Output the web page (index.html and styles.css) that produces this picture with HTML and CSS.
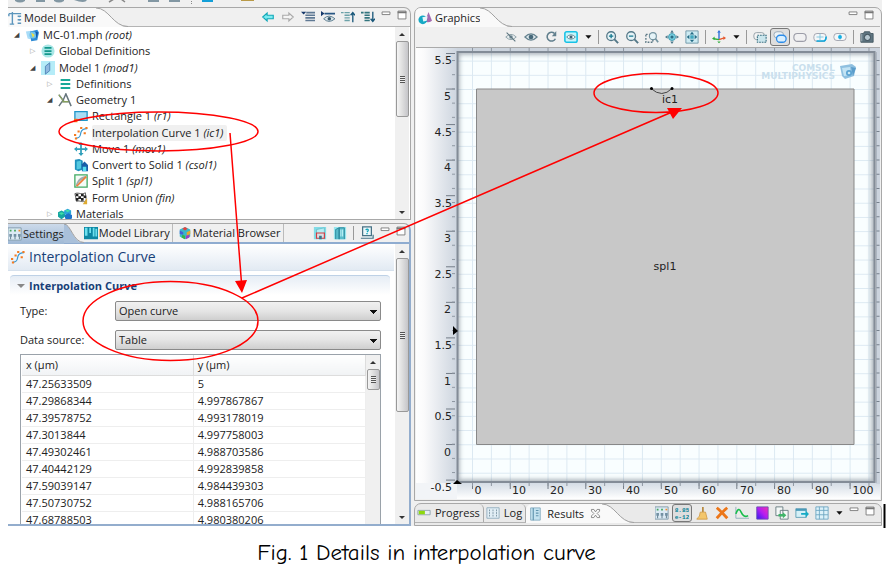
FILE: index.html
```html
<!DOCTYPE html>
<html lang="en">
<head>
<meta charset="utf-8">
<title>Details in interpolation curve</title>
<link rel="stylesheet" href="styles.css">
</head>
<body>
<svg class="defs" aria-hidden="true">
  <defs>
    <symbol id="i-builder" viewBox="0 0 16 16"><path d="M1 3h14M5 1v14M1 3v3M2 15h5M13 5v2M13 9v2M13 13v1M11 6h4M11 10h4M11 14h4" fill="none" stroke="#5c96bd" stroke-width="1.6"/></symbol>
    <symbol id="i-root" viewBox="0 0 16 16"><path d="M1 4l6-1v10l-4-1z" fill="#a9dcf7"/><path d="M6 4l8-2 2 3-2 9-7 1z" fill="#2d8ad4"/><circle cx="9" cy="8" r="4" fill="#6fc3ee"/><path d="M7 5l4 3-2 3" fill="#f3e13f"/><path d="M12 4l3 1-2 7" fill="#1358a8"/></symbol>
    <symbol id="i-globe" viewBox="0 0 16 16"><circle cx="8" cy="8" r="7.5" fill="#a8e6e6"/><path d="M4 4.500h8M4 8h8M4 11.500h8" stroke="#12978b" stroke-width="2"/></symbol>
    <symbol id="i-model" viewBox="0 0 16 16"><path d="M0 0h16v16H0z" fill="#b5ecf8"/><path d="M5 6l5-4v9l-5 4z" fill="#8fb9e0" stroke="#4d81b5"/></symbol>
    <symbol id="i-defs" viewBox="0 0 16 16"><path d="M3 3.500h11M3 8h11M3 12.500h11" stroke="#19a999" stroke-width="2.400"/></symbol>
    <symbol id="i-geom" viewBox="0 0 16 16"><path d="M1 15l5-7 3-7 6 14M1 2l6 8M5 10h8" fill="none" stroke="#67767d" stroke-width="1.700"/><path d="M1 2l5 7M5 10h7" stroke="#9ab94a" fill="none"/></symbol>
    <symbol id="i-rect" viewBox="0 0 16 16"><path d="M1 3h14v10H1z" fill="#a9def5" stroke="#2196c8" stroke-width="1.500"/><path d="M0 11h4v4H0z" fill="#f58220"/></symbol>
    <symbol id="i-curve" viewBox="0 0 16 16"><path d="M2 14c6 0 5-4 6-7s3-4 7-4" fill="none" stroke="#3a99d0" stroke-width="1.400"/><path d="M0 9h2.500v2.500H0zM4 5h2.500v2.500H4zM7 1h2.500v2.500H7zM13 1h2.500v2.500H13zM11 7h2.500v2.500H11zM1 13h2.500v2.500H1z" fill="#f47b20"/></symbol>
    <symbol id="i-move" viewBox="0 0 16 16"><path d="M8 0l3 3.500H9V7h3.500V5L16 8l-3.500 3V9H9v3.500h2L8 16l-3-3.500h2V9H3.500v2L0 8l3.500-3v2H7V3.500H5z" fill="#2f9fba"/></symbol>
    <symbol id="i-convert" viewBox="0 0 16 16"><path d="M1 2l5-1 4 2v10l-5 2-4-2z" fill="#1e91bd"/><path d="M3 4l5-1v9l-5 1z" fill="#54c8e0"/><path d="M9 7l3-3 4 4v7H9z" fill="#1a5ea8"/><path d="M10 10h4v5h-4z" fill="#57dff0"/></symbol>
    <symbol id="i-split" viewBox="0 0 16 16"><path d="M1 1h14v14H1z" fill="#f4fbf6" stroke="#41aa63" stroke-width="1.500"/><path d="M2 13c2-7 6-10 12-11l-3 4c-4 1-6 4-8 8z" fill="#a2a9ae"/><path d="M3 14l11-11" stroke="#ef7d35" stroke-width="2"/></symbol>
    <symbol id="i-union" viewBox="0 0 16 16"><path d="M1 3c5-2 7 2 12-1l1 9c-5 3-7-1-11 1z" fill="#fff" stroke="#555"/><path d="M2 3h3v3H2zM8 3h3v3H8zM5 6h3v3H5zM11 5h3v3h-3zM2 8h3v3H2zM8 8h3v3H8z" fill="#222"/><path d="M10 15l5-7v7z" fill="#dfab31"/></symbol>
    <symbol id="i-mat" viewBox="0 0 16 16"><path d="M0 6l4-2 4 2v5l-4 3-4-3z" fill="#16a6a1"/><path d="M7 4l4-2 4 2v4l-4 2-4-2z" fill="#2aa6d8"/><path d="M8 9l4-2 4 2v4l-4 2-4-2z" fill="#1d73c9"/><path d="M1 7l3-1 3 1-3 2zM8 4l3-1 3 1-3 2z" fill="#3de0a4"/></symbol>
    <symbol id="i-browser" viewBox="0 0 16 16"><path d="M8 1l6 3v8l-6 3-6-3V4z" fill="#3bb7c9"/><path d="M8 1l3 2-3 2-3-2z" fill="#e6413a"/><path d="M2 5l4 2v3L2 9z" fill="#4561d6"/><path d="M10 7l4-2v4l-4 2z" fill="#e9a52e"/><path d="M5 10l3 1v4l-4-2z" fill="#35b34a"/><path d="M9 11l4-1v3l-4 2z" fill="#a03ec0"/></symbol>
    <symbol id="i-settings" viewBox="0 0 16 16"><path d="M0 1h15v14H0z" fill="#dceaf4" stroke="#7d97a8"/><path d="M3 8v6M8 8v6M13 8v6" stroke="#54707f"/><path d="M2 4h2M7 4h2" stroke="#43a55a" stroke-width="2"/><path d="M12 4h2" stroke="#f08a2c" stroke-width="2"/><path d="M1.500 8h3v3h-3zM6.500 8h3v3h-3zM11.500 8h3v3h-3z" fill="#7390a2"/></symbol>
    <symbol id="i-lib" viewBox="0 0 16 16"><path d="M0 1h16v14H0z" fill="#0d87a3"/><path d="M1 2h3v9H1zM6 2h2v6H6zM10 2h2v10h-2zM13 3h2v9h-2z" fill="#6ce0ee"/></symbol>
    <symbol id="i-back" viewBox="0 0 16 16"><path d="M2 8l5-4.500V6h7v4H7v2.500z" fill="#7cecf2" stroke="#13a8b8" stroke-width="1.300"/></symbol>
    <symbol id="i-fwd" viewBox="0 0 16 16"><path d="M14 8L9 3.500V6H2v4h7v2.500z" fill="#f5f5f5" stroke="#aaa" stroke-width="1.300"/></symbol>
    <symbol id="i-list" viewBox="0 0 16 16"><path d="M0 2h6L3 5z" fill="#16386b"/><path d="M6 3h10M5 6h11M5 9h11M5 12h11" stroke="#5f7994" stroke-width="1.800"/></symbol>
    <symbol id="i-listeye" viewBox="0 0 16 16"><path d="M0 1v6l4-3z" fill="#16386b"/><path d="M4 4h12" stroke="#285784" stroke-width="2"/><path d="M3 10q6-6 13 0-7 6-13 0z" fill="#dbe6ec" stroke="#4f7286"/><circle cx="9.500" cy="10" r="2" fill="#35566b"/></symbol>
    <symbol id="i-up" viewBox="0 0 16 16"><path d="M0 3h3M4 3h6M4 6h6M4 9h6M4 12h6" stroke="#6ca2a9" stroke-width="1.600"/><path d="M13.500 14V3M11 6l2.500-3L16 6" fill="none" stroke="#175679" stroke-width="1.500"/></symbol>
    <symbol id="i-down" viewBox="0 0 16 16"><path d="M0 3h3M4 3h6M4 6h6M4 9h6M4 12h6" stroke="#33757e" stroke-width="1.800"/><path d="M13.500 2v11M11 10l2.500 3 2.500-3" fill="none" stroke="#175679" stroke-width="1.500"/></symbol>
    <symbol id="i-min" viewBox="0 0 16 16"><path d="M3.500 4.500h9v3h-9z" fill="#fff" stroke="#777"/></symbol>
    <symbol id="i-max" viewBox="0 0 16 16"><path d="M3.500 3.500h9v9h-9z" fill="#fff" stroke="#777"/><path d="M3 5h10" stroke="#777" stroke-width="2"/></symbol>
    <symbol id="i-build" viewBox="0 0 16 16"><path d="M1 1h14v14H1z" fill="#83dce6"/><path d="M4 15V4l9-2v13" fill="#b6eef3" stroke="#6cc0cd"/><path d="M4 8h9v6H4z" fill="#d9dfe4" stroke="#d2393f" stroke-width="1.300"/><path d="M7 11h3v4H7z" fill="#35798b"/></symbol>
    <symbol id="i-buildall" viewBox="0 0 16 16"><path d="M1 1h14v14H1z" fill="#96e6ee"/><path d="M3 15V4l4-2v13M7 15V2h6v13" fill="#59bccb" stroke="#2a8699"/><path d="M9 4v8M11 4v8" stroke="#d4fbff"/></symbol>
    <symbol id="i-help" viewBox="0 0 16 16"><path d="M3 1h10v10H3zM1 14h14v-4" fill="#eaf7fa" stroke="#477285" stroke-width="1.400"/><path d="M6.500 4.500q2-2 3 0 0 1-1.500 2.500M8 8v1.500" fill="none" stroke="#0ba2b7" stroke-width="1.500"/></symbol>
    <symbol id="i-graph" viewBox="0 0 16 16"><path d="M8 12L12 1l4 10q-4 3-8 1z" fill="#a46bb0"/><circle cx="5.500" cy="10" r="5" fill="#16a9c5"/><path d="M5 7l6-1-1 5-4 1z" fill="#e6f7fb"/></symbol>
    <symbol id="i-eye" viewBox="0 0 16 16"><path d="M1 8q7-7 14 0-7 7-14 0z" fill="#dce6eb" stroke="#64828f" stroke-width="1.300"/><circle cx="8" cy="8" r="2.700" fill="#466879"/></symbol>
    <symbol id="i-eyeoff" viewBox="0 0 16 16"><path d="M2 8q6-6 12 0-6 6-12 0z" fill="#e8edef" stroke="#879ba4"/><circle cx="8" cy="8" r="2" fill="#6f8893"/><path d="M3 3l10 10" stroke="#5c747f" stroke-width="1.300"/></symbol>
    <symbol id="i-reset" viewBox="0 0 16 16"><path d="M13 10a5 5 0 1 1-1-6" fill="none" stroke="#617f8d" stroke-width="1.800"/><path d="M14 1v6H9z" fill="#617f8d"/></symbol>
    <symbol id="i-eyebox" viewBox="0 0 16 16"><rect x="1" y="2" width="14" height="12" rx="2" fill="#c5f5fb" stroke="#18c2e6" stroke-width="1.800"/><path d="M3 8q5-5 10 0-5 5-10 0z" fill="#fff" stroke="#557b8a"/><circle cx="8" cy="8" r="1.800" fill="#3d6374"/></symbol>
    <symbol id="i-caret" viewBox="0 0 16 16"><path d="M5 6h7l-3.500 4z" fill="#111"/></symbol>
    <symbol id="i-zin" viewBox="0 0 16 16"><circle cx="7" cy="7" r="5" fill="#e5f3f7" stroke="#547888" stroke-width="1.500"/><path d="M10.500 10.500L15 15" stroke="#547888" stroke-width="2.200"/><path d="M4.500 7h5M7 4.500v5" stroke="#16798f" stroke-width="1.500"/></symbol>
    <symbol id="i-zout" viewBox="0 0 16 16"><circle cx="7" cy="7" r="5" fill="#e5f3f7" stroke="#547888" stroke-width="1.500"/><path d="M10.500 10.500L15 15" stroke="#547888" stroke-width="2.200"/><path d="M4.500 7h5" stroke="#16798f" stroke-width="1.500"/></symbol>
    <symbol id="i-zbox" viewBox="0 0 16 16"><path d="M1 5h8v9H1z" fill="none" stroke="#5b7784" stroke-width="1.500" stroke-dasharray="2 1.500"/><circle cx="9" cy="7" r="4" fill="#e5f3f7" stroke="#7494a1" stroke-width="1.300"/><path d="M12 10l3 4" stroke="#7494a1" stroke-width="2"/></symbol>
    <symbol id="i-zsel" viewBox="0 0 16 16"><path d="M8 0l2 3H6zM8 16l2-3H6zM0 8l3-2v4zM16 8l-3-2v4z" fill="#4a7689"/><circle cx="8" cy="8" r="4" fill="#78cfe0" stroke="#3995ab"/><circle cx="8" cy="8" r="1.800" fill="#2b6c83"/></symbol>
    <symbol id="i-zext" viewBox="0 0 16 16"><path d="M1 1h14v14H1z" fill="#cdeaf2" stroke="#6d94a5"/><path d="M8 2l2.500 3h-5zM8 14l2.500-3h-5zM2 8l3-2.500v5zM14 8l-3-2.500v5z" fill="#256c86"/><path d="M6 6h4v4H6z" fill="#42a8bf"/></symbol>
    <symbol id="i-axes" viewBox="0 0 16 16"><path d="M8 11V3" stroke="#2169d8" stroke-width="1.500"/><path d="M8 11l6-2" stroke="#e6572c" stroke-width="1.500"/><path d="M8 11l-6-1" stroke="#2dad3c" stroke-width="1.500"/><path d="M6 3l2-3 2 3z" fill="#2169d8"/><path d="M13 7l3 2-3 2.500z" fill="#e6572c"/><path d="M0 10l3-2.500v4zM6 13l2 2 2-2" fill="#2dad3c"/></symbol>
    <symbol id="i-selbox" viewBox="0 0 16 16"><rect x="1" y="3" width="12" height="8" rx="3" fill="#f5f5f5" stroke="#8c98a0"/><path d="M5 6h10v8H5z" fill="#cbe6ed" stroke="#3d7385" stroke-width="1.300" stroke-dasharray="2 1"/></symbol>
    <symbol id="i-selobj" viewBox="0 0 16 16"><rect x="1" y="2" width="11" height="7" rx="3.500" fill="#edf2f6" stroke="#92a4b1"/><rect x="4" y="6" width="11" height="8" rx="4" fill="#d8efff" stroke="#2d8ce8" stroke-width="1.500"/></symbol>
    <symbol id="i-seldom" viewBox="0 0 16 16"><rect x="1" y="4" width="14" height="9" rx="4" fill="#f1f1f2" stroke="#9c9da8" stroke-width="1.300"/></symbol>
    <symbol id="i-selbnd" viewBox="0 0 16 16"><rect x="1" y="4" width="14" height="9" rx="3.500" fill="#f3f7f9" stroke="#9c9da8"/><path d="M4 12.500h9q2-1 2-5" fill="none" stroke="#0aa7dd" stroke-width="1.800"/><path d="M4 8h8M8 4v8" stroke="#78c4dd"/></symbol>
    <symbol id="i-selpt" viewBox="0 0 16 16"><rect x="1" y="4" width="14" height="8" rx="3.500" fill="#f3f7f9" stroke="#9c9da8"/><path d="M8 4v8" stroke="#9bc9d7"/><circle cx="8" cy="8" r="2.200" fill="#12aee3"/></symbol>
    <symbol id="i-cam" viewBox="0 0 16 16"><path d="M1 4h3l1-2h6l1 2h3v10H1z" fill="#5e7480" stroke="#42565f"/><circle cx="8.500" cy="8.500" r="3.500" fill="#b6c7d0" stroke="#304049"/><path d="M2 4v9" stroke="#a9b9c1"/></symbol>
    <symbol id="i-progress" viewBox="0 0 16 16"><path d="M1 5h14v5H1z" fill="#e7eff4" stroke="#8ba0ad"/><path d="M2 5.500h7v4H2z" fill="#8dd80e"/></symbol>
    <symbol id="i-log" viewBox="0 0 16 16"><path d="M1 2h14v12H1z" fill="#e1eef5" stroke="#8facbd"/><path d="M4 4v8M8 4v8M12 4v8" stroke="#76909f" stroke-dasharray="2 1"/></symbol>
    <symbol id="i-results" viewBox="0 0 16 16"><path d="M3 1h11v14H3z" fill="#c4e3f0" stroke="#85abc0"/><path d="M6 1v14M9 4h3M9 7h3M9 10h3" stroke="#6094ad" stroke-width="1.300"/></symbol>
    <symbol id="i-close" viewBox="0 0 16 16"><path d="M3 3h3l2 3 2-3h3v2l-3 3 3 3v2h-3l-2-3-2 3H3v-2l3-3-3-3z" fill="#f9f9f9" stroke="#777"/></symbol>
    <symbol id="i-digits" viewBox="0 0 16 16"><text x="8" y="7" text-anchor="middle" class="digits">8.85</text><text x="8" y="15" text-anchor="middle" class="digits">e-12</text></symbol>
    <symbol id="i-broom" viewBox="0 0 16 16"><path d="M9 1v6" stroke="#b98b42" stroke-width="2"/><path d="M6 7h6l2 8H2q4-3 4-8z" fill="#f3c66c" stroke="#d19c48"/></symbol>
    <symbol id="i-delete" viewBox="0 0 16 16"><path d="M2 2q6 5 12 12M14 2Q8 7 2 14" stroke="#ec7619" stroke-width="3.200" fill="none"/></symbol>
    <symbol id="i-plot" viewBox="0 0 16 16"><path d="M1 1v13h15" fill="none" stroke="#8dabb9"/><path d="M1 9q3-9 6-2t8 4" fill="none" stroke="#16bd4b" stroke-width="1.800"/></symbol>
    <symbol id="i-surface" viewBox="0 0 16 16"><path d="M2 1h13v14H2z" fill="url(#purple)" stroke="#684cb1"/></symbol>
    <symbol id="i-copy" viewBox="0 0 16 16"><path d="M1 1h8v10H1zM6 5h9v10H6z" fill="#f4f8f7" stroke="#63777e"/><path d="M4 9h5V7l4 3.500L9 14v-2H4z" fill="#3fb469"/></symbol>
    <symbol id="i-export" viewBox="0 0 16 16"><path d="M1 3h12v10H1z" fill="#d5f0f7" stroke="#5d9bb5"/><path d="M1 4.500h12" stroke="#4295b5" stroke-width="2"/><path d="M7 8h5V5l4 4-4 4v-3H7z" fill="#15abc5"/></symbol>
    <symbol id="i-grid" viewBox="0 0 16 16"><path d="M1 1h14v14H1zM1 5h14M1 10h14M5 1v14M10 1v14" fill="#dcf1f9" stroke="#6ba5c1"/></symbol>
    <linearGradient id="purple" x1="0" y1="1" x2="1" y2="0"><stop offset="0" stop-color="#2c1cf0"/><stop offset=".5" stop-color="#b21df2"/><stop offset="1" stop-color="#f72fb1"/></linearGradient>
    <linearGradient id="rulerX" x1="0" x2="1" y1="0" y2="0"><stop offset="0" stop-color="#fff"/><stop offset=".2" stop-color="#fafafb"/><stop offset="1" stop-color="#cdd5df"/></linearGradient>
    <linearGradient id="rulerY" x1="0" x2="0" y1="0" y2="1"><stop offset="0" stop-color="#d4dce5"/><stop offset="1" stop-color="#fff"/></linearGradient>
  </defs>
</svg>

<figure class="figure">
  <div class="app">
    <div class="strip" aria-hidden="true">
      <svg viewBox="8 0 874 7"><g fill="#8297a3"><path d="M15 0h10v1q-5 3-10 0zM36 0h9v2h-9zM54 0h10v1q-5 3-10 0zM74 0h13q-2 4-13 0zM148 0h11v2h-11zM169 0h11v2h-11z"/></g><path d="M109 2l5-3M121-1l4 3" stroke="#888" stroke-width="1.500"/><path d="M191.500 1v4" stroke="#888" stroke-dasharray="1 1"/><path d="M202 0h11v2h-11z" fill="#139fd8"/><path d="M241 0h13v1h-13z" fill="#b99a48"/></svg>
    </div>
    <div class="workspace">
      <div class="column left">
        <section class="panel builder">
          <header class="bar">
            <button class="tab current"><svg class="ico"><use href="#i-builder"/></svg>Model Builder</button>
            <svg class="sweep" viewBox="0 0 32 19" preserveAspectRatio="none"><path class="fill" d="M0 0C13 0 17 19 32 19H0z"/><path class="edge" d="M0 0C13 0 17 18.500 32 18.500"/></svg>
            <div class="tools">
              <button aria-label="Back"><svg><use href="#i-back"/></svg></button>
              <button aria-label="Forward"><svg><use href="#i-fwd"/></svg></button>
              <button aria-label="List"><svg><use href="#i-list"/></svg></button>
              <button aria-label="Show"><svg><use href="#i-listeye"/></svg></button>
              <button aria-label="Collapse"><svg><use href="#i-up"/></svg></button>
              <button aria-label="Expand"><svg><use href="#i-down"/></svg></button>
              <button class="win" aria-label="Minimize"><svg><use href="#i-min"/></svg></button>
              <button class="win" aria-label="Maximize"><svg><use href="#i-max"/></svg></button>
            </div>
          </header>
          <div class="scrollbox">
            <ul class="tree">
              <li class="open"><svg class="ico"><use href="#i-root"/></svg><span>MC-01.mph <i>(root)</i></span></li>
              <li class="l1 shut"><svg class="ico"><use href="#i-globe"/></svg><span>Global Definitions</span></li>
              <li class="l1 open"><svg class="ico"><use href="#i-model"/></svg><span>Model 1 <i>(mod1)</i></span></li>
              <li class="l2 shut"><svg class="ico"><use href="#i-defs"/></svg><span>Definitions</span></li>
              <li class="l2 open"><svg class="ico"><use href="#i-geom"/></svg><span>Geometry 1</span></li>
              <li class="l3"><svg class="ico"><use href="#i-rect"/></svg><span>Rectangle 1 <i>(r1)</i></span></li>
              <li class="l3 picked"><svg class="ico"><use href="#i-curve"/></svg><span>Interpolation Curve 1 <i>(ic1)</i></span></li>
              <li class="l3"><svg class="ico"><use href="#i-move"/></svg><span>Move 1 <i>(mov1)</i></span></li>
              <li class="l3"><svg class="ico"><use href="#i-convert"/></svg><span>Convert to Solid 1 <i>(csol1)</i></span></li>
              <li class="l3"><svg class="ico"><use href="#i-split"/></svg><span>Split 1 <i>(spl1)</i></span></li>
              <li class="l3"><svg class="ico"><use href="#i-union"/></svg><span>Form Union <i>(fin)</i></span></li>
              <li class="l2 shut"><svg class="ico"><use href="#i-mat"/></svg><span>Materials</span></li>
            </ul>
            <div class="scroll"><span class="arrow up"></span><span class="thumb tree-thumb"></span><span class="arrow down"></span></div>
          </div>
        </section>

        <section class="panel settings">
          <header class="bar">
            <button class="tab active"><svg class="ico"><use href="#i-settings"/></svg>Settings</button>
            <svg class="sweep blue" viewBox="0 0 32 19" preserveAspectRatio="none"><path class="fill" d="M0 0C7 0 9 19 20 19H0z"/><path class="edge" d="M0 0C7 0 9 18.500 20 18.500"/></svg>
            <button class="tab"><svg class="ico"><use href="#i-lib"/></svg>Model Library</button>
            <button class="tab"><svg class="ico"><use href="#i-browser"/></svg>Material Browser</button>
            <div class="tools">
              <button aria-label="Build selected"><svg><use href="#i-build"/></svg></button>
              <button aria-label="Build all"><svg><use href="#i-buildall"/></svg></button>
              <span class="sep"></span>
              <button aria-label="Help"><svg><use href="#i-help"/></svg></button>
              <button class="win" aria-label="Minimize"><svg><use href="#i-min"/></svg></button>
              <button class="win" aria-label="Maximize"><svg><use href="#i-max"/></svg></button>
            </div>
          </header>
          <div class="scrollbox">
            <div class="form">
              <h1><svg class="ico"><use href="#i-curve"/></svg>Interpolation Curve</h1>
              <h2>Interpolation Curve</h2>
              <div class="field"><label for="type">Type:</label><select id="type"><option>Open curve</option></select></div>
              <div class="field"><label for="source">Data source:</label><select id="source"><option>Table</option></select></div>
              <div class="grid">
                <table>
                  <thead><tr><th>x (µm)</th><th>y (µm)</th></tr></thead>
                  <tbody>
                    <tr><td>47.25633509</td><td>5</td></tr>
                    <tr><td>47.29868344</td><td>4.997867867</td></tr>
                    <tr><td>47.39578752</td><td>4.993178019</td></tr>
                    <tr><td>47.3013844</td><td>4.997758003</td></tr>
                    <tr><td>47.49302461</td><td>4.988703586</td></tr>
                    <tr><td>47.40442129</td><td>4.992839858</td></tr>
                    <tr><td>47.59039147</td><td>4.984439303</td></tr>
                    <tr><td>47.50730752</td><td>4.988165706</td></tr>
                    <tr><td>47.68788503</td><td>4.980380206</td></tr>
                  </tbody>
                </table>
                <div class="scroll"><span class="arrow up"></span><span class="thumb grid-thumb"></span></div>
              </div>
            </div>
            <div class="scroll"><span class="arrow up"></span><span class="thumb form-thumb"></span><span class="arrow down"></span></div>
          </div>
        </section>
      </div>

      <div class="column right">
        <section class="panel graphics">
          <header class="bar">
            <button class="tab current"><svg class="ico"><use href="#i-graph"/></svg>Graphics</button>
            <svg class="sweep" viewBox="0 0 32 19" preserveAspectRatio="none"><path class="fill" d="M0 0C13 0 17 19 32 19H0z"/><path class="edge" d="M0 0C13 0 17 18.500 32 18.500"/></svg>
            <div class="tools">
              <button class="win" aria-label="Minimize"><svg><use href="#i-min"/></svg></button>
              <button class="win" aria-label="Maximize"><svg><use href="#i-max"/></svg></button>
            </div>
          </header>
          <div class="toolbar tools">
            <button aria-label="Hide"><svg><use href="#i-eyeoff"/></svg></button>
            <button aria-label="Show"><svg><use href="#i-eye"/></svg></button>
            <button aria-label="Reset hiding"><svg><use href="#i-reset"/></svg></button>
            <button aria-label="View hidden"><svg><use href="#i-eyebox"/></svg></button>
            <button class="caret" aria-label="More views"><svg><use href="#i-caret"/></svg></button>
            <span class="sep"></span>
            <button aria-label="Zoom in"><svg><use href="#i-zin"/></svg></button>
            <button aria-label="Zoom out"><svg><use href="#i-zout"/></svg></button>
            <button aria-label="Zoom box"><svg><use href="#i-zbox"/></svg></button>
            <button aria-label="Zoom selected"><svg><use href="#i-zsel"/></svg></button>
            <button aria-label="Zoom extents"><svg><use href="#i-zext"/></svg></button>
            <span class="sep"></span>
            <button aria-label="Axes"><svg><use href="#i-axes"/></svg></button>
            <button class="caret" aria-label="More axes"><svg><use href="#i-caret"/></svg></button>
            <span class="sep"></span>
            <button aria-label="Select box"><svg><use href="#i-selbox"/></svg></button>
            <button class="pressed" aria-label="Select objects"><svg><use href="#i-selobj"/></svg></button>
            <button aria-label="Select domains"><svg><use href="#i-seldom"/></svg></button>
            <button aria-label="Select boundaries"><svg><use href="#i-selbnd"/></svg></button>
            <button aria-label="Select points"><svg><use href="#i-selpt"/></svg></button>
            <span class="sep"></span>
            <button aria-label="Snapshot"><svg><use href="#i-cam"/></svg></button>
          </div>
          <svg class="plot" viewBox="416 47 464 452" role="img" aria-label="Geometry plot">
            <defs>
              <pattern id="cells" x="472" y="18" width="18.880" height="14.210" patternUnits="userSpaceOnUse"><path d="M.5 0v15M0 .5h19" stroke="#dce9f2" fill="none"/></pattern>
              <pattern id="xMajor" x="472" y="483" width="37.760" height="6" patternUnits="userSpaceOnUse"><path d="M.5 0v6" stroke="#727b86"/></pattern>
              <pattern id="xMinor" x="472" y="483" width="18.880" height="3" patternUnits="userSpaceOnUse"><path d="M.5 0v3" stroke="#8d96a1"/></pattern>
              <pattern id="xTop" x="472" y="48" width="18.880" height="3" patternUnits="userSpaceOnUse"><path d="M.5 0v3" stroke="#8d96a1"/></pattern>
              <pattern id="yMajor" x="446" y="53" width="9" height="35.550" patternUnits="userSpaceOnUse"><path d="M0 .5h9" stroke="#727b86"/></pattern>
              <pattern id="yMinor" x="452" y="60" width="3" height="14.210" patternUnits="userSpaceOnUse"><path d="M0 .5h3" stroke="#8d96a1"/></pattern>
              <clipPath id="view"><path d="M457 52h420v431H457z"/></clipPath>
              <filter id="soft"><feGaussianBlur stdDeviation="2"/></filter>
            </defs>
            <path d="M416 47h464v452H416z" fill="#fff"/>
            <path d="M416 47h41v436h-41z" fill="url(#rulerX)"/>
            <path d="M457 483h423v16H457z" fill="url(#rulerY)"/>
            <path d="M416 483h41v16h-41z" fill="#f2f4f7"/>
            <path d="M457 47h423v5H457zM876 47h4v437h-4z" fill="#cbd3dd"/>
            <path d="M416 47.500h464" stroke="#aaa"/>
            <path d="M457 52h418v430H457z" fill="#f9feff"/>
            <g clip-path="url(#view)">
              <path d="M457 52h418v430H457z" fill="url(#cells)"/>
              <path d="M457 52h417v430H457z" fill="none" stroke="#5e6976" stroke-width="5" opacity=".55" filter="url(#soft)"/>
            </g>
            <path d="M457.500 52h417v430h-417z" fill="none" stroke="#838c97" stroke-width="2"/>
            <path d="M472 483h408v6H472z" fill="url(#xMajor)"/><path d="M472 483h408v3H472z" fill="url(#xMinor)"/><path d="M472 48h408v3H472z" fill="url(#xTop)"/>
            <path d="M446 53h9v430h-9z" fill="url(#yMajor)"/><path d="M452 60h3v423h-3z" fill="url(#yMinor)"/>
            <path d="M878 60v423" stroke="#77818d" stroke-width="3" stroke-dasharray="1 13.210"/>
            <path d="M476.500 89h377.500v355.500H476.500z" fill="#c8c8c8" stroke="#888"/>
            <path d="M651 88.500q11 10 21 0" fill="none" stroke="#444"/><circle cx="651.500" cy="88.500" r="1.500"/><circle cx="672" cy="88.500" r="1.500"/>
            <path d="M453 326l5 5-5 4zM453 484h9l-5-4z" fill="#000"/>
            <g class="axis" text-anchor="end">
              <text x="452" y="64">5.5</text><text x="451" y="100">5</text><text x="452" y="136">4.5</text><text x="451" y="171">4</text><text x="452" y="207">3.5</text><text x="451" y="242">3</text><text x="452" y="278">2.5</text><text x="451" y="313">2</text><text x="452" y="349">1.5</text><text x="451" y="385">1</text><text x="452" y="420">0.5</text><text x="451" y="456">0</text><text x="452" y="491">-0.5</text>
            </g>
            <g class="axis" text-anchor="middle">
              <text x="478" y="494">0</text><text x="519" y="494">10</text><text x="557" y="494">20</text><text x="595" y="494">30</text><text x="633" y="494">40</text><text x="671" y="494">50</text><text x="709" y="494">60</text><text x="747" y="494">70</text><text x="784" y="494">80</text><text x="822" y="494">90</text><text x="863" y="494">100</text>
              <text x="670" y="103">ic1</text><text x="665" y="270">spl1</text>
            </g>
            <g class="brand" text-anchor="end"><text x="835" y="71">COMSOL</text><text x="835" y="79">MULTIPHYSICS</text></g>
            <path d="M840 66l12-2 4 3-2 9-9 3-3-3z" fill="#8fc0e0"/><path d="M842 68l8-1 1 8-7 1z" fill="#c2e3f4"/><path d="M851 67l5 1-3 8z" fill="#5b9dcb"/><circle cx="849" cy="73" r="3" fill="#5ba3d2"/><circle cx="849" cy="73" r="1.300" fill="#c8e8f6"/>
          </svg>
        </section>

        <section class="panel results">
          <header class="bar">
            <button class="tab"><svg class="ico"><use href="#i-progress"/></svg>Progress</button>
            <button class="tab"><svg class="ico"><use href="#i-log"/></svg>Log</button>
            <button class="tab current"><svg class="ico"><use href="#i-results"/></svg>Results<svg class="ico close"><use href="#i-close"/></svg></button>
            <svg class="sweep" viewBox="0 0 32 19" preserveAspectRatio="none"><path class="fill" d="M0 0C13 0 17 19 32 19H0z"/><path class="edge" d="M0 0C13 0 17 18.500 32 18.500"/></svg>
            <div class="tools">
              <button aria-label="Settings"><svg><use href="#i-settings"/></svg></button>
              <button class="pressed" aria-label="Full precision"><svg><use href="#i-digits"/></svg></button>
              <button aria-label="Clear"><svg><use href="#i-broom"/></svg></button>
              <button aria-label="Delete"><svg><use href="#i-delete"/></svg></button>
              <button aria-label="Plot"><svg><use href="#i-plot"/></svg></button>
              <button aria-label="Surface"><svg><use href="#i-surface"/></svg></button>
              <button aria-label="Copy"><svg><use href="#i-copy"/></svg></button>
              <button aria-label="Export"><svg><use href="#i-export"/></svg></button>
              <button aria-label="Table"><svg><use href="#i-grid"/></svg></button>
              <button class="caret" aria-label="More tables"><svg><use href="#i-caret"/></svg></button>
              <button class="win" aria-label="Minimize"><svg><use href="#i-min"/></svg></button>
              <button class="win" aria-label="Maximize"><svg><use href="#i-max"/></svg></button>
            </div>
          </header>
        </section>
      </div>
    </div>
  </div>
  <figcaption>Fig. 1 Details in interpolation curve</figcaption>
  <svg class="marks" viewBox="0 0 886 565" preserveAspectRatio="none" aria-hidden="true">
    <g fill="none" stroke="#f00" stroke-width="1.500">
      <ellipse cx="158.500" cy="131.500" rx="99.500" ry="19.500"/>
      <ellipse cx="170.500" cy="321" rx="87.500" ry="39.500"/>
      <ellipse cx="656" cy="93" rx="62" ry="19.500"/>
      <path d="M230 133l11.500 150M242 298l430-186"/>
    </g>
    <path d="M235 281l12-1-5 13zM667 108h15l-9 11z" fill="#f00"/>
    <path d="M884.500 504v24" stroke="#000" stroke-width="2"/>
  </svg>
</figure>
</body>
</html>
```

FILE: styles.css
```css
* { box-sizing: border-box; }

body {
  margin: 0;
  background: #fff;
  color: #222;
  font: 11px/16px "Open Sans", "Noto Sans", sans-serif;
}

button {
  font: inherit;
  color: inherit;
  margin: 0;
  padding: 0;
  border: 0;
  background: none;
}

.defs { position: absolute; width: 0; height: 0; }
.digits { font: bold 7px "Liberation Mono", monospace; fill: #058195; }

.figure { position: relative; margin: 0; }
.app { margin: 0 4px 0 8px; background: #f0f0f0; }
.strip { height: 7px; overflow: hidden; }
.strip svg { display: block; width: 100%; height: 7px; }

.workspace { display: grid; grid-template-columns: 403fr 468fr; gap: 3px; }
.column { display: flex; flex-direction: column; min-width: 0; }
.left { gap: 3px; }
.right { gap: 2px; }

.panel { border: 1px solid #a8a8a8; border-radius: 7px 7px 0 0; background: #f0f0f0; overflow: hidden; }
.left .panel { border-left: 0; border-top-left-radius: 0; display: flex; flex-direction: column; }
.builder { height: 213px; }
.settings { height: 303px; }
.graphics { padding: 0 1px 1px; }

.bar { display: flex; height: 19px; flex: none; border-bottom: 1px solid #b4b4b4; }
.tab { display: flex; align-items: center; gap: 4px; padding: 0 4px 0 5px; white-space: nowrap; }
.tab.current { background: #f9f9f9; margin-bottom: -1px; padding-right: 0; }
.builder .tab { padding-left: 0; gap: 2px; }
.graphics .tab { padding-left: 2px; gap: 3px; }
.sweep { width: 32px; height: 19px; flex: none; display: block; }
.sweep .fill { fill: #f9f9f9; }
.sweep .edge { fill: none; stroke: #a0a0a0; }
.ico { width: 14px; height: 14px; flex: none; }

.tools { display: flex; align-items: center; margin-left: auto; }
.right .tools { padding-right: 3px; }
.tools button { width: 20px; height: 18px; display: grid; place-items: center; flex: none; }
.tools svg { width: 14px; height: 14px; display: block; }
.tools .win { width: 16px; padding-bottom: 4px; }
.tools .caret { width: 14px; }
.tools .sep { width: 1px; height: 14px; margin: 0 3px; background: #999; }
.tools .pressed { border: 1px solid #777; border-radius: 3px; background: #dedede; }

.scrollbox { display: flex; flex: 1; min-height: 0; background: #fff; overflow: hidden; }
.scroll { width: 14px; flex: none; display: flex; flex-direction: column; align-items: center; background: #f0f0f0; }
.arrow { width: 0; height: 0; border: 3px solid transparent; flex: none; }
.arrow.up { border-bottom-color: #333; margin: 3px 0 5px; }
.arrow.down { border-top-color: #333; margin: auto 0 2px; }
.thumb {
  width: 13px;
  flex: none;
  display: grid;
  place-items: center;
  border: 1px solid #999;
  border-radius: 2px;
  background: linear-gradient(90deg, #f5f5f5, #e0e0e0 45%, #c5c5c9);
}
.thumb::after {
  content: "";
  width: 5px;
  height: 7px;
  background: repeating-linear-gradient(#555 0 1px, #eee 1px 2px);
}
.tree-thumb { height: 76px; }
.form-thumb { height: 154px; }
.grid-thumb { height: 21px; }

.tree { flex: 1; height: 195px; margin: 0; padding: 0 0 0 3px; list-style: none; display: flex; flex-direction: column; }
.tree li { flex: 1; display: flex; align-items: center; gap: 4px; white-space: nowrap; }
.tree li::before { content: ""; width: 10px; text-align: center; font-size: 7px; color: #999; }
.tree .open::before { content: "◢"; color: #444; }
.tree .shut::before { content: "▷"; }
.tree .l1 { padding-left: 16px; }
.tree .l2 { padding-left: 33px; }
.tree .l3 { padding-left: 49px; }
.picked span { background: #f0f0f0; border-radius: 2px; padding-right: 3px; }
.builder .scroll { margin-right: 1px; }

.settings { border-right: 2px solid #93adcd; border-bottom: 2px solid #93adcd; }
.settings .bar { border-bottom: 2px solid #8facd0; height: 20px; }
.settings .tab { border-right: 1px solid #bbb; padding: 0 2px 0 5px; gap: 1px; }
.settings .tab.active { border: 0; padding: 0; background: linear-gradient(#ccdaea, #9eb8d5); margin-bottom: -2px; }
.sweep.blue .fill { fill: #a9c0da; }
.sweep.blue { margin-right: -17px; }
.form { flex: 1; min-width: 0; display: flex; flex-direction: column; margin-right: 1px; }
h1 {
  display: flex;
  align-items: center;
  gap: 4px;
  margin: 0 0 4px;
  padding-left: 3px;
  height: 27px;
  flex: none;
  font-size: 14px;
  font-weight: 400;
  color: #173f78;
  background: linear-gradient(#fff, #e2eaf3);
  border-bottom: 1px solid #d6e1ed;
}
h2 {
  display: flex;
  align-items: center;
  gap: 4px;
  flex: none;
  margin: 0 4px 6px 2px;
  padding-left: 7px;
  height: 20px;
  font-size: 11px;
  font-weight: 700;
  color: #173f78;
  border-top: 1px solid #bed1e6;
  border-radius: 4px 4px 0 0;
  background: linear-gradient(#e6edf5, #fff);
}
h2::before { content: ""; border: 4px solid transparent; border-top-color: #888; border-bottom: 0; }
.field { display: grid; grid-template-columns: 95px 1fr; align-items: center; flex: none; margin: 0 13px 9px 12px; height: 20px; }
select {
  appearance: none;
  width: 100%;
  height: 20px;
  padding: 0 3px;
  border: 1px solid #8a8a8a;
  border-radius: 2px;
  color: #222;
  font: inherit;
  background:
    conic-gradient(from -45deg at 50% 100%, #111 90deg, transparent 0) right 3px top 8px / 8px 4px no-repeat,
    linear-gradient(#f1f1f1, #e5e5e5 50%, #cfcfcf);
  background:
    linear-gradient(#111, #111) right 3px top 8px / 7px 1px no-repeat,
    linear-gradient(#111, #111) right 4px top 9px / 5px 1px no-repeat,
    linear-gradient(#111, #111) right 5px top 10px / 3px 1px no-repeat,
    linear-gradient(#111, #111) right 6px top 11px / 1px 1px no-repeat,
    linear-gradient(#f1f1f1, #e5e5e5 50%, #cfcfcf);
}
.grid { display: flex; flex: 1; min-height: 0; margin: -5px 13px 0 12px; border: 1px solid #9aa2aa; border-bottom: 0; overflow: hidden; }
.grid table { flex: 1; align-self: flex-start; border-collapse: collapse; table-layout: fixed; margin-left: 1px; }
th, td { height: 17px; padding: 0 4px; text-align: left; font-weight: 400; line-height: 16px; border-right: 1px solid #eee; border-bottom: 1px solid #eee; }
th { height: 20px; background: linear-gradient(#fff, #f1f3f5); border-color: #ddd; }

.toolbar { height: 20px; justify-content: flex-end; }
.plot { display: block; width: 100%; height: auto; }
.axis { font: 11px "DejaVu Sans", sans-serif; fill: #222; }
.brand { font: bold 9px "DejaVu Sans", sans-serif; fill: #c9dfed; }

.results { height: 23px; background: #eaeaea; }
.results .tab { border-right: 1px solid #aaa; border-radius: 5px 5px 0 0; padding: 0 3px 0 2px; gap: 4px; }
.results .tab.current { border: 0; border-radius: 6px 0 0; padding-right: 0; gap: 5px; }
.results .close { width: 13px; height: 13px; }

figcaption {
  margin-top: 14px;
  padding-right: 33px;
  text-align: center;
  color: #000;
  font: 23px/25px "Comic Sans MS", "Comic Neue", Lato, sans-serif;
}

.marks { position: absolute; top: 0; left: 0; width: 100%; height: 565px; pointer-events: none; }
```
